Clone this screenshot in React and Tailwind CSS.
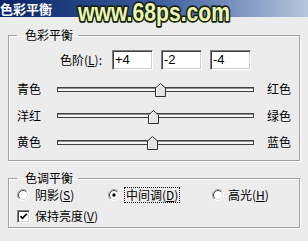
import React from "react";

function Radio({ checked }) {
  return (
    <svg width="12" height="12" viewBox="0 0 12 12" className="shrink-0">
      <circle cx="6" cy="6" r="4.5" fill="#fff" />
      <path d="M2.11 9.89 A5.5 5.5 0 0 1 9.89 2.11" stroke="#a0a0a0" fill="none" />
      <path d="M9.89 2.11 A5.5 5.5 0 0 1 2.11 9.89" stroke="#fff" fill="none" />
      <path d="M2.82 9.18 A4.5 4.5 0 0 1 9.18 2.82" stroke="#505050" fill="none" />
      <path d="M9.18 2.82 A4.5 4.5 0 0 1 2.82 9.18" stroke="#dcdcdc" fill="none" />
      {checked && <circle cx="6" cy="6" r="1.7" fill="#000" />}
    </svg>
  );
}

function Thumb() {
  return (
    <svg width="11" height="14" viewBox="0 0 11 14">
      <polygon points="5.5,0.5 10.5,5 10.5,13.5 0.5,13.5 0.5,5" fill="#e4e4e4" stroke="#303030" />
      <polyline points="1.5,12.5 1.5,5.4 5.5,1.8" fill="none" stroke="#fff" />
    </svg>
  );
}

const sliders = [
  { l: "青色", r: "红色", pos: 103 },
  { l: "洋红", r: "绿色", pos: 96 },
  { l: "黄色", r: "蓝色", pos: 95 },
];

const fieldsetCls =
  "border border-[#a0a0a0] shadow-[inset_1px_1px_0_#fff,1px_1px_0_#fff] px-[8px]";

export default function App() {
  return (
    <div className="w-[308px] h-[241px] bg-[#ececec] relative overflow-hidden font-['Noto_Sans_CJK_SC','Noto_Sans_CJK_JP',sans-serif] text-[12px] text-black">
      <div className="h-[17px] bg-linear-to-r from-[#0a246a] via-[#3a5a9c] to-[#b8c6dc] text-white font-bold text-[13px] leading-[17px]">
        色彩平衡
      </div>
      <div className="px-[8px] pt-[11px]">
        <fieldset className={fieldsetCls + " pb-[8px]"}>
          <legend className="pl-[8px] pr-[5px] leading-[14px]">色彩平衡</legend>
          <div className="flex items-center h-[20px] mt-[8px]">
            <span className="w-[85px] text-right leading-[14px]">
              色阶(<span className="underline underline-offset-[1px]">L</span>):
            </span>
            <div className="flex gap-[8px] ml-[10px]">
              {["+4", "-2", "-4"].map((v) => (
                <div
                  key={v}
                  className="w-[41px] h-[20px] bg-white border border-t-[#808080] border-l-[#808080] border-b-white border-r-white shadow-[inset_1px_1px_0_#404040,inset_-1px_-1px_0_#d4d0c8] pl-[2px] font-['Liberation_Sans',sans-serif] text-[13px] leading-[18px]"
                >
                  {v}
                </div>
              ))}
            </div>
          </div>
          <div className="flex flex-col gap-[6.5px] mt-[9px]">
            {sliders.map((s) => (
              <div key={s.l} className="flex items-center h-[20px]">
                <span className="w-[40px] leading-[14px]">{s.l}</span>
                <div className="relative w-[197px] h-[20px] flex items-center">
                  <div className="w-full h-[5px] border border-[#404040] bg-[#f6f6f6] shadow-[inset_0_1px_0_#909090]" />
                  <div
                    className="absolute top-[4px] h-[14px] w-[11px]"
                    style={{ left: s.pos - 5.5 }}
                  >
                    <Thumb />
                  </div>
                </div>
                <span className="ml-auto leading-[14px]">{s.r}</span>
              </div>
            ))}
          </div>
        </fieldset>
        <fieldset className={fieldsetCls + " mt-[10px] pb-[3px]"}>
          <legend className="pl-[8px] pr-[5px] leading-[14px]">色调平衡</legend>
          <div className="flex items-center h-[16px] mt-[2px]">
            <div className="flex items-center w-[91px]">
              <Radio />
              <span className="ml-[6px] leading-[14px]">
                阴影(<span className="underline underline-offset-[1px]">S</span>)
              </span>
            </div>
            <div className="flex items-center w-[104px]">
              <Radio checked />
              <span className="ml-[4px] leading-[14px] border border-dotted border-black px-[1px]">
                中间调(<span className="underline underline-offset-[1px]">D</span>)
              </span>
            </div>
            <div className="flex items-center">
              <Radio />
              <span className="ml-[4px] leading-[14px]">
                高光(<span className="underline underline-offset-[1px]">H</span>)
              </span>
            </div>
          </div>
          <div className="flex items-center h-[16px] mt-[5px]">
            <div className="w-[13px] h-[13px] bg-white border border-t-[#808080] border-l-[#808080] border-b-white border-r-white shadow-[inset_1px_1px_0_#404040,inset_-1px_-1px_0_#d4d0c8] flex items-center justify-center">
              <svg width="9" height="9" viewBox="0 0 9 9">
                <polyline points="1.5,4.2 3.5,6.3 7.8,1.8" fill="none" stroke="#000" strokeWidth="1.7" />
              </svg>
            </div>
            <span className="ml-[5px] leading-[14px]">
              保持亮度(<span className="underline underline-offset-[1px]">V</span>)
            </span>
          </div>
        </fieldset>
      </div>
      <svg className="absolute left-[76px] top-0" width="160" height="32" viewBox="0 0 160 32">
        <text
          x="2"
          y="21"
          fontFamily="Liberation Sans, sans-serif"
          fontWeight="bold"
          fontSize="25"
          textLength="152"
          lengthAdjust="spacingAndGlyphs"
          fill="#eef6b4"
          stroke="#16240e"
          strokeWidth="3.5"
          strokeLinejoin="round"
          paintOrder="stroke"
        >
          www.68ps.com
        </text>
      </svg>
    </div>
  );
}
